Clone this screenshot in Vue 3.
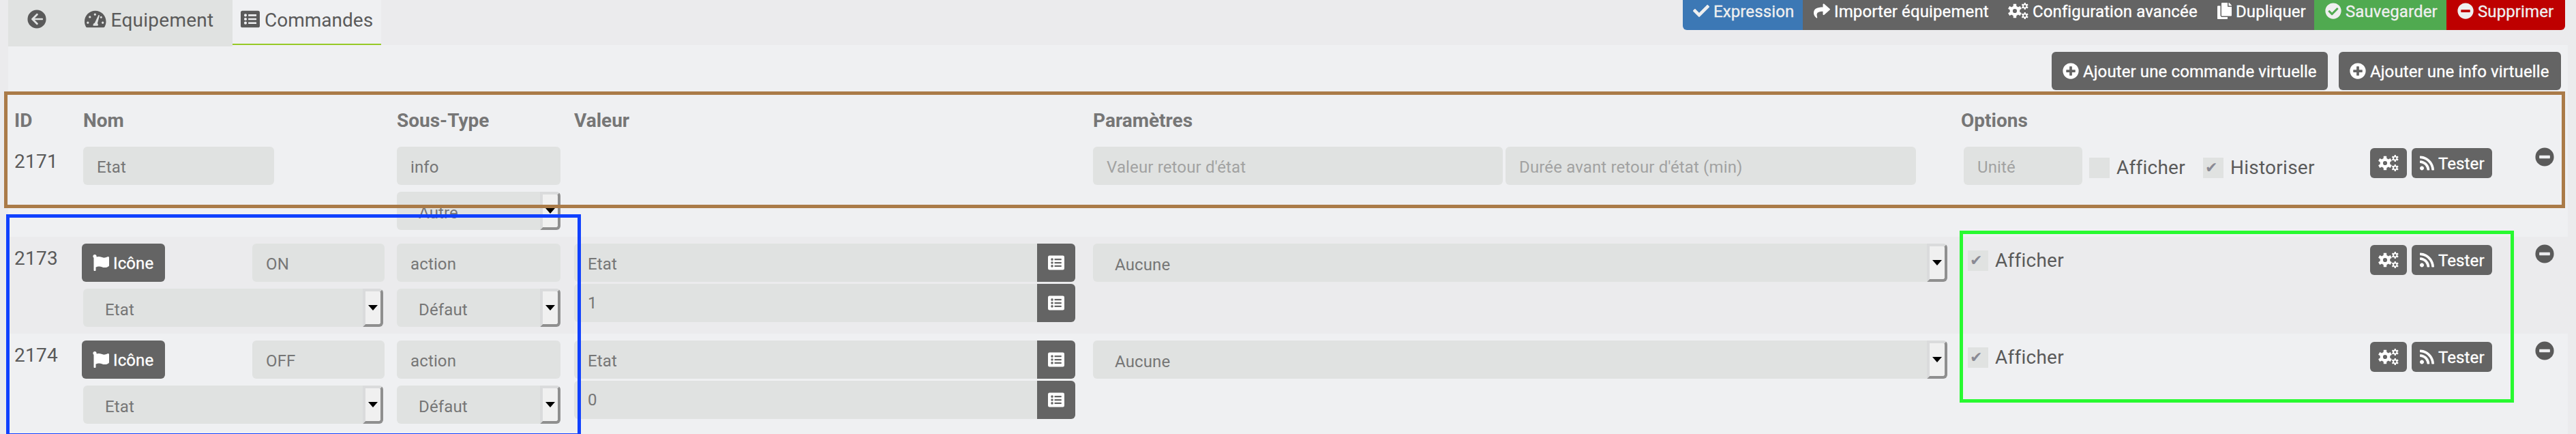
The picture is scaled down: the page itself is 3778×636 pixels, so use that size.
<script setup>
import { h } from 'vue'

const gear = (cx, cy, ro, ri, n, hole) => {
  const step = (Math.PI * 2) / n
  const pts = []
  for (let i = 0; i < n; i++) {
    const a = i * step - Math.PI / 2
    for (const [r, k] of [[ri, -0.31], [ro, -0.2], [ro, 0.2], [ri, 0.31]]) {
      pts.push(`${(cx + r * Math.cos(a + k * step)).toFixed(1)} ${(cy + r * Math.sin(a + k * step)).toFixed(1)}`)
    }
  }
  return `M${pts.join('L')}ZM${cx - hole} ${cy}a${hole} ${hole} 0 1 0 ${hole * 2} 0a${hole} ${hole} 0 1 0 ${-hole * 2} 0Z`
}
const dot = (cx, cy, r) => `M${cx - r} ${cy}a${r} ${r} 0 1 0 ${r * 2} 0a${r} ${r} 0 1 0 ${-r * 2} 0Z`
const disc = dot(256, 256, 248)

const icons = {
  back: [512, disc + 'M276 110c-8-8-20-8-28 0L116 242c-8 8-8 20 0 28l132 132c8 8 20 8 28 0l8-8c8-8 8-20 0-28l-86-86h206c11 0 16-8 16-16v-16c0-8-5-16-16-16H198l86-86c8-8 8-20 0-28z'],
  dash: [576, 'M288 32C129 32 0 161 0 320c0 53 14 102 39 145 6 9 16 15 27 15h444c11 0 21-6 27-15 25-43 39-92 39-145C576 161 447 32 288 32z' + dot(88, 352, 30) + dot(142, 200, 30) + dot(280, 132, 30) + dot(488, 352, 30) + 'M372 150c12-6 30 2 28 18l-54 200c22 18 22 44 8 64H232c-12-32 8-62 38-70z' + dot(444, 205, 28)],
  list: [512, 'M48 32h416a48 48 0 0 1 48 48v352a48 48 0 0 1-48 48H48a48 48 0 0 1-48-48V80a48 48 0 0 1 48-48z' + dot(128, 152, 38) + dot(128, 256, 38) + dot(128, 360, 38) + 'M204 128h208a10 10 0 0 1 10 10v28a10 10 0 0 1-10 10H204zM204 232h208a10 10 0 0 1 10 10v28a10 10 0 0 1-10 10H204zM204 336h208a10 10 0 0 1 10 10v28a10 10 0 0 1-10 10H204z'],
  check: [512, 'M173.898 439.404l-166.400-166.400c-9.997-9.997-9.997-26.206 0-36.204l36.203-36.204c9.997-9.998 26.207-9.998 36.204 0L192 312.690 432.095 72.596c9.997-9.997 26.207-9.997 36.204 0l36.203 36.204c9.997 9.997 9.997 26.206 0 36.204l-294.400 294.401c-9.998 9.997-26.207 9.997-36.204-.001z'],
  share: [512, 'M503.691 189.836L327.687 37.851C312.281 24.546 288 35.347 288 56.015v80.053C127.371 137.907 0 170.100 0 322.326c0 61.441 39.581 122.309 83.333 154.132 13.653 9.931 33.111-2.533 28.077-18.631C66.066 312.814 132.917 274.316 288 272.085V360c0 20.700 24.300 31.453 39.687 18.164l176.004-152c11.071-9.562 11.086-26.753 0-36.328z'],
  cogs: [640, gear(213, 256, 222, 158, 6, 66) + gear(528, 106, 110, 78, 6, 36) + gear(528, 406, 110, 78, 6, 36)],
  copy: [448, 'M320 448v40c0 13.255-10.745 24-24 24H24c-13.255 0-24-10.745-24-24V120c0-13.255 10.745-24 24-24h72v296c0 30.879 25.121 56 56 56h168zm0-344V0H152c-13.255 0-24 10.745-24 24v368c0 13.255 10.745 24 24 24h272c13.255 0 24-10.745 24-24V128H344c-13.200 0-24-10.800-24-24zm120.971-31.029L375.029 7.029A24 24 0 0 0 358.059 0H352v96h96v-6.059a24 24 0 0 0-7.029-16.970z'],
  ok: [512, disc + 'M227.314 387.314l184-184c6.248-6.248 6.248-16.379 0-22.627l-22.627-22.627c-6.248-6.249-16.379-6.249-22.628 0L216 308.118l-70.059-70.059c-6.248-6.248-16.379-6.248-22.628 0l-22.627 22.627c-6.248 6.248-6.248 16.379 0 22.627l104 104c6.249 6.249 16.379 6.249 22.628.001z'],
  minus: [512, disc + 'M124 296c-6.600 0-12-5.400-12-12v-56c0-6.600 5.400-12 12-12h264c6.600 0 12 5.400 12 12v56c0 6.600-5.400 12-12 12H124z'],
  plus: [512, disc + 'M400 284c0 6.600-5.400 12-12 12h-92v92c0 6.600-5.400 12-12 12h-56c-6.600 0-12-5.400-12-12v-92h-92c-6.600 0-12-5.400-12-12v-56c0-6.600 5.400-12 12-12h92v-92c0-6.600 5.400-12 12-12h56c6.600 0 12 5.400 12 12v92h92c6.600 0 12 5.400 12 12v56z'],
  rss: [448, 'M128.081 415.959c0 35.369-28.672 64.041-64.041 64.041S0 451.328 0 415.959s28.672-64.041 64.041-64.041 64.040 28.673 64.040 64.041zm175.660 47.250c-8.354-154.600-132.185-278.587-286.950-286.950C7.656 175.765 0 183.105 0 192.253v48.069c0 8.415 6.490 15.472 14.887 16.018 111.832 7.284 201.473 96.702 208.772 208.772.547 8.397 7.604 14.887 16.018 14.887h48.069c9.149.001 16.489-7.655 15.995-16.790zm144.249.288C439.596 229.677 251.465 40.445 16.503 32.010 7.473 31.686 0 38.981 0 48.016v48.068c0 8.625 6.835 15.645 15.453 15.999 191.179 7.839 344.627 161.316 352.465 352.465.353 8.618 7.373 15.453 15.999 15.453h48.068c9.034-.001 16.329-7.474 16.005-16.504z'],
  flag: [512, 'M349.565 98.783C295.978 98.783 251.721 64 184.348 64c-24.955 0-47.309 4.384-68.045 12.013a55.947 55.947 0 0 0 3.586-23.562C118.117 24.015 94.806 1.206 66.338.048 34.345-1.254 8 24.296 8 56c0 19.026 9.497 35.825 24 45.945V488c0 13.255 10.745 24 24 24h16c13.255 0 24-10.745 24-24v-94.400c28.311-12.064 63.582-22.122 114.435-22.122 53.588 0 97.844 34.783 165.217 34.783 48.169 0 86.667-16.294 122.505-40.858C506.840 359.452 512 349.571 512 339.045v-243.100c0-23.393-24.269-38.870-45.485-29.016-34.338 15.948-76.454 31.854-116.950 31.854z']
}

const Icon = ({ name, size = 24 }) => {
  const [w, d] = icons[name]
  return h('svg', { class: 'icon', width: (w / 512) * size, height: size, viewBox: `0 0 ${w} 512`, fill: 'currentColor' },
    [h('path', { d, 'fill-rule': 'evenodd' })])
}
Icon.props = ['name', 'size']

const actions = [
  { cls: 'expression', icon: 'check', label: 'Expression' },
  { cls: 'import', icon: 'share', label: 'Importer équipement' },
  { cls: 'config', icon: 'cogs', label: 'Configuration avancée' },
  { cls: 'copy', icon: 'copy', label: 'Dupliquer' },
  { cls: 'save', icon: 'ok', label: 'Sauvegarder' },
  { cls: 'remove', icon: 'minus', label: 'Supprimer' }
]
const headers = ['ID', 'Nom', 'Sous-Type', 'Valeur', 'Paramètres', 'Options', '']
const rows = [
  { id: '2171', info: true, name: 'Etat', type: 'info', sub: 'Autre' },
  { id: '2173', name: 'ON', type: 'action', sub: 'Défaut', value: '1' },
  { id: '2174', name: 'OFF', type: 'action', sub: 'Défaut', value: '0' }
]
</script>

<template>
  <div class="page">
    <header class="top">
      <nav class="tabs">
        <a class="tab back"><Icon name="back" :size="28" /></a>
        <a class="tab equip"><Icon name="dash" :size="28" /><span>Equipement</span></a>
        <a class="tab active"><Icon name="list" :size="28" /><span>Commandes</span></a>
      </nav>
      <div class="actions">
        <a v-for="a in actions" :key="a.label" class="action" :class="a.cls"><Icon :name="a.icon" /><span>{{ a.label }}</span></a>
      </div>
    </header>

    <main class="panel">
      <div class="adders">
        <a class="btn add-cmd"><Icon name="plus" /><span>Ajouter une commande virtuelle</span></a>
        <a class="btn add-info"><Icon name="plus" /><span>Ajouter une info virtuelle</span></a>
      </div>

      <div class="row head">
        <div v-for="t in headers" :key="t" class="th">{{ t }}</div>
      </div>

      <div v-for="r in rows" :key="r.id" class="row line">
        <div class="id">{{ r.id }}</div>

        <div v-if="r.info" class="name"><div class="field name-info">{{ r.name }}</div></div>
        <div v-else class="name stack">
          <div class="name-line">
            <a class="btn flag"><Icon name="flag" /><span>Icône</span></a>
            <div class="field name-action">{{ r.name }}</div>
          </div>
          <div class="select name-select"><span>Etat</span><i class="arrow"></i></div>
        </div>

        <div class="stack type">
          <div class="field">{{ r.type }}</div>
          <div class="select"><span>{{ r.sub }}</span><i class="arrow"></i></div>
        </div>

        <div class="value">
          <template v-if="!r.info">
            <div class="group first"><span>Etat</span><a class="pick"><Icon name="list" /></a></div>
            <div class="group"><span>{{ r.value }}</span><a class="pick"><Icon name="list" /></a></div>
          </template>
        </div>

        <div class="params">
          <template v-if="r.info">
            <div class="field hint state">Valeur retour d'état</div>
            <div class="field hint delay">Durée avant retour d'état (min)</div>
          </template>
          <div v-else class="select"><span>Aucune</span><i class="arrow"></i></div>
        </div>

        <div class="options">
          <div v-if="r.info" class="checks with-unit">
            <div class="field hint unit">Unité</div>
            <i class="box"></i><span class="lbl first-lbl">Afficher</span>
            <i class="box">✔</i><span class="lbl">Historiser</span>
          </div>
          <div v-else class="checks"><i class="box">✔</i><span class="lbl">Afficher</span></div>
          <div class="tools">
            <a class="btn small cog"><Icon name="cogs" /></a>
            <a class="btn small test"><Icon name="rss" /><span>Tester</span></a>
          </div>
        </div>

        <div class="del"><Icon name="minus" :size="28" /></div>
      </div>
    </main>

    <div class="mark brown"></div>
    <div class="mark blue"></div>
    <div class="mark green"></div>
  </div>
</template>

<style>
html, body { overflow: hidden; background: #ebebed; }
</style>

<style scoped>
* { box-sizing: border-box; }
.page {
  position: relative; width: 3778px; height: 636px; overflow: hidden;
  background: #ebebed; color: #5a5a5a; font: 400 28px/40px Roboto, sans-serif; letter-spacing: 0.25px; padding: 0 12px;
}
.icon { display: block; flex: none; }
.top { display: flex; justify-content: space-between; height: 66px; padding-right: 4px; }
.tabs { display: flex; height: 68px; position: relative; }
.tab { display: flex; background: #e0e2e1; height: 68px; padding-top: 14px; }
.tab span { margin: -6px 0 0 7px; line-height: 40px; padding-top: 2px; }
.back { width: 90px; padding-left: 28px; }
.equip { width: 239px; padding-left: 22px; }
.active { width: 218px; height: 66px; padding-left: 12px; background: #eff0f2; border-bottom: 2px solid #96c927; }
.active span { letter-spacing: 0; }
.actions { display: flex; height: 44px; border-radius: 0 0 6px 6px; overflow: hidden; }
.action {
  display: flex; align-items: center; gap: 6px; height: 44px; padding: 0 0 12px 16px;
  font-size: 24px; line-height: 32px; color: #fff; background: #646464; white-space: nowrap;
}
.action span, .btn span { letter-spacing: 0.11px; -webkit-text-stroke: 0.35px currentColor; padding-top: 1px; }
.expression { width: 176px; background: #3c78b5; color: #efefef; padding-left: 15px; }
.import { width: 285px; }
.config { width: 307px; }
.copy { width: 158px; }
.save { width: 194px; background: #50aa50; color: #efefef; }
.remove { width: 174px; background: #be0000; color: #efefef; }

.panel { width: 3754px; height: 570px; background: #eff0f2; }
.adders { display: flex; justify-content: flex-end; gap: 16px; padding: 10px 10px 0 0; height: 81px; }
.btn {
  display: flex; align-items: center; gap: 6px; height: 56px; border-radius: 6px; padding: 0 0 0 16px;
  background: #646464; color: #fff; font-size: 24px; line-height: 32px; white-space: nowrap;
}
.add-cmd { width: 405px; }
.add-info { width: 326px; }

.row { display: grid; grid-template-columns: 110px 460px 260px 761px 1273px 842px 48px; }
.head { height: 58px; font-weight: 700; color: #767676; padding-top: 10px; letter-spacing: 0; }
.th:first-child { padding-left: 9px; }
.line { height: 142px; padding-top: 10px; }
.line:nth-child(4) { background: #ebebed; }
.id { padding: 2px 0 0 9px; }
.stack { display: flex; flex-direction: column; gap: 10px; }
.field, .select, .group {
  height: 56px; border-radius: 6px; background: #e0e2e1; color: #767676; font-size: 24px; line-height: 56px;
  padding: 2px 0 0 20px; white-space: nowrap; letter-spacing: 0.14px;
}
.hint { color: #a2a2a2; }
.name-info { width: 280px; }
.name-line { display: flex; width: 442px; justify-content: space-between; }
.flag { width: 122px; margin-left: -2px; }
.name-action { width: 194px; }
.type { width: 240px; }
.select { position: relative; display: flex; justify-content: space-between; padding: 0 0 0 32px; }
.select span { padding-top: 3px; }
.name-select { width: 440px; }
.arrow {
  width: 30px; height: 56px; border: 4px solid; border-color: #dadbdc #8f8f8f #8f8f8f #dadbdc;
  background: #f0f0f0; border-radius: 0 6px 6px 0; display: flex; justify-content: center; padding-top: 20px;
}
.arrow::after { content: ''; height: 0; border: 7px solid transparent; border-top: 8px solid #000; border-bottom: 0; }
.value { display: flex; flex-direction: column; gap: 3px; width: 735px; }
.group { display: flex; justify-content: space-between; padding: 0 0 0 20px; }
.first span { padding-top: 2px; }
.pick { width: 56px; height: 56px; background: #646464; color: #fff; border-radius: 0 6px 6px 0; display: flex; align-items: center; justify-content: center; }
.params { display: flex; gap: 4px; }
.params .select { width: 1253px; height: 56px; }
.state { width: 601px; }
.delay { width: 602px; }
.options { display: flex; justify-content: space-between; padding-right: 63px; }
.checks { display: flex; padding-left: 10px; }
.with-unit { padding-left: 4px; }
.unit { width: 174px; margin-right: 10px; }
.box {
  width: 30px; height: 30px; margin: 10px 10px 0 0; background: #e0e2e1; color: #8a8a94;
  font: 400 22px/30px "DejaVu Sans", sans-serif; padding-left: 3px;
}
.with-unit .box { margin-top: 16px; }
.lbl { padding-top: 5px; width: 101px; white-space: nowrap; }
.with-unit .lbl { padding-top: 11px; }
.first-lbl { margin-right: 26px; }
.tools { display: flex; gap: 7px; padding-top: 2px; }
.small { height: 44px; }
.cog { width: 54px; padding: 0 0 0 12px; }
.test { width: 118px; padding-left: 12px; }
.del { padding-top: 1px; }

.mark { position: absolute; border: 5px solid; }
.brown { left: 6px; top: 134px; width: 3756px; height: 171px; border-color: #aa7b48; }
.blue { left: 9px; top: 314px; width: 843px; height: 326px; border-color: #1041ff; }
.green { left: 2874px; top: 338px; width: 813px; height: 252px; border-color: #28fa30; }
</style>
